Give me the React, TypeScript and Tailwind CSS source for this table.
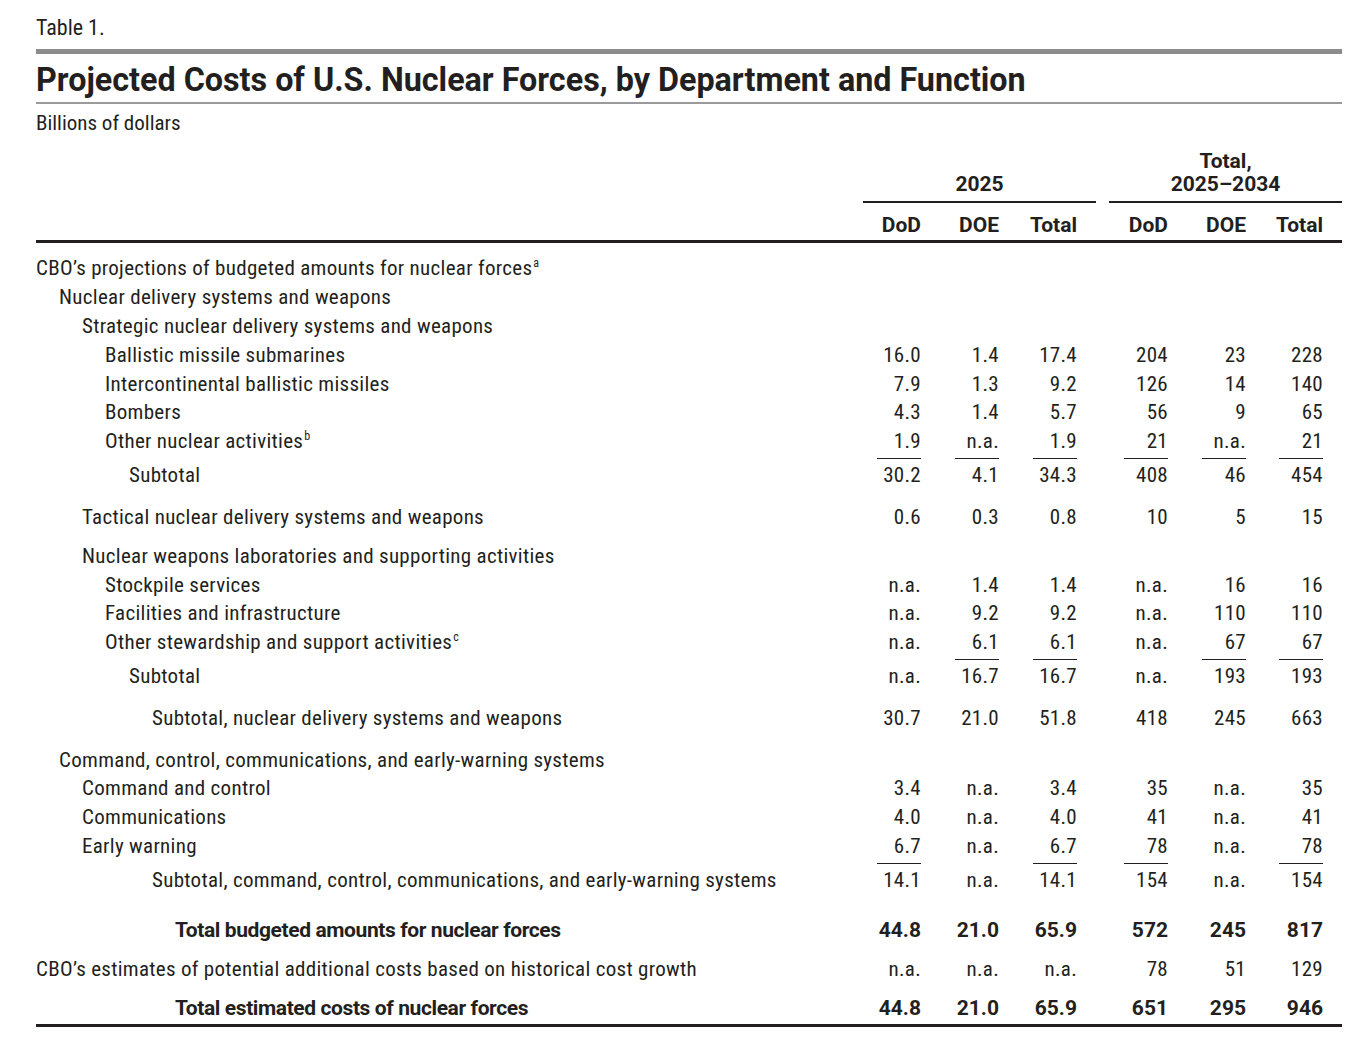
import React from "react";

type RowDef = {
  label: React.ReactNode;
  indent: number;
  vals?: string[];
  bold?: boolean;
  sub?: boolean;
  rules?: boolean[];
  cls: string;
};

const INDENT = [
  "pl-0",
  "pl-[23px]",
  "pl-[46px]",
  "pl-[69px]",
  "pl-[93px]",
  "pl-[116px]",
  "pl-[139px]",
];

const CELL_W1 = ["w-[58px]", "w-[78px]", "w-[78px]"];
const CELL_W2 = ["w-[59px]", "w-[78px]", "w-[77px]"];

const Sup = ({ c }: { c: string }) => (
  <sup className="text-[12px] top-[-0.7em] ml-[1px]">{c}</sup>
);

const all = [true, true, true, true, true, true];

const rows: RowDef[] = [
  {
    label: (
      <>
        CBO’s projections of budgeted amounts for nuclear forces
        <Sup c="a" />
      </>
    ),
    indent: 0,
    cls: "mt-[12px] h-[28.8px]",
  },
  { label: "Nuclear delivery systems and weapons", indent: 1, cls: "h-[28.8px]" },
  { label: "Strategic nuclear delivery systems and weapons", indent: 2, cls: "h-[28.8px]" },
  {
    label: "Ballistic missile submarines",
    indent: 3,
    vals: ["16.0", "1.4", "17.4", "204", "23", "228"],
    cls: "h-[28.8px]",
  },
  {
    label: "Intercontinental ballistic missiles",
    indent: 3,
    vals: ["7.9", "1.3", "9.2", "126", "14", "140"],
    cls: "h-[28.8px]",
  },
  {
    label: "Bombers",
    indent: 3,
    vals: ["4.3", "1.4", "5.7", "56", "9", "65"],
    cls: "h-[28.8px]",
  },
  {
    label: (
      <>
        Other nuclear activities
        <Sup c="b" />
      </>
    ),
    indent: 3,
    vals: ["1.9", "n.a.", "1.9", "21", "n.a.", "21"],
    cls: "h-[28.8px]",
  },
  {
    label: "Subtotal",
    indent: 4,
    vals: ["30.2", "4.1", "34.3", "408", "46", "454"],
    sub: true,
    rules: all,
    cls: "mt-[2px] h-[35px]",
  },
  {
    label: "Tactical nuclear delivery systems and weapons",
    indent: 2,
    vals: ["0.6", "0.3", "0.8", "10", "5", "15"],
    cls: "mt-[10px] h-[29px]",
  },
  {
    label: "Nuclear weapons laboratories and supporting activities",
    indent: 2,
    cls: "mt-[10px] h-[28.7px]",
  },
  {
    label: "Stockpile services",
    indent: 3,
    vals: ["n.a.", "1.4", "1.4", "n.a.", "16", "16"],
    cls: "h-[28.7px]",
  },
  {
    label: "Facilities and infrastructure",
    indent: 3,
    vals: ["n.a.", "9.2", "9.2", "n.a.", "110", "110"],
    cls: "h-[28.7px]",
  },
  {
    label: (
      <>
        Other stewardship and support activities
        <Sup c="c" />
      </>
    ),
    indent: 3,
    vals: ["n.a.", "6.1", "6.1", "n.a.", "67", "67"],
    cls: "h-[28.7px]",
  },
  {
    label: "Subtotal",
    indent: 4,
    vals: ["n.a.", "16.7", "16.7", "n.a.", "193", "193"],
    sub: true,
    rules: [false, true, true, false, true, true],
    cls: "mt-[2px] h-[35px]",
  },
  {
    label: "Subtotal, nuclear delivery systems and weapons",
    indent: 5,
    vals: ["30.7", "21.0", "51.8", "418", "245", "663"],
    cls: "mt-[10px] h-[29px]",
  },
  {
    label: "Command, control, communications, and early-warning systems",
    indent: 1,
    cls: "mt-[13px] h-[28.7px]",
  },
  {
    label: "Command and control",
    indent: 2,
    vals: ["3.4", "n.a.", "3.4", "35", "n.a.", "35"],
    cls: "h-[28.7px]",
  },
  {
    label: "Communications",
    indent: 2,
    vals: ["4.0", "n.a.", "4.0", "41", "n.a.", "41"],
    cls: "h-[28.7px]",
  },
  {
    label: "Early warning",
    indent: 2,
    vals: ["6.7", "n.a.", "6.7", "78", "n.a.", "78"],
    cls: "h-[28.7px]",
  },
  {
    label: "Subtotal, command, control, communications, and early-warning systems",
    indent: 5,
    vals: ["14.1", "n.a.", "14.1", "154", "n.a.", "154"],
    sub: true,
    rules: [true, false, true, true, false, true],
    cls: "mt-[2px] h-[35px]",
  },
  {
    label: "Total budgeted amounts for nuclear forces",
    indent: 6,
    vals: ["44.8", "21.0", "65.9", "572", "245", "817"],
    bold: true,
    cls: "mt-[18px] h-[29px]",
  },
  {
    label: "CBO’s estimates of potential additional costs based on historical cost growth",
    indent: 0,
    vals: ["n.a.", "n.a.", "n.a.", "78", "51", "129"],
    cls: "mt-[10px] h-[29px]",
  },
  {
    label: "Total estimated costs of nuclear forces",
    indent: 6,
    vals: ["44.8", "21.0", "65.9", "651", "295", "946"],
    bold: true,
    cls: "mt-[10px] h-[29px]",
  },
];

function Cell({
  v,
  w,
  sub,
  rule,
}: {
  v?: string;
  w: string;
  sub?: boolean;
  rule?: boolean;
}) {
  if (sub) {
    return (
      <div className={`${w} flex justify-end self-start`}>
        <div
          className={`w-[44px] text-right leading-[32px] border-t-[1.5px] ${
            rule ? "border-[#231f20]" : "border-transparent"
          }`}
        >
          {v}
        </div>
      </div>
    );
  }
  return <div className={`${w} text-right`}>{v}</div>;
}

function Row({ r }: { r: RowDef }) {
  const v = r.vals;
  return (
    <div
      className={`flex items-center ${r.cls} ${
        r.bold ? "font-bold [font-stretch:100%] tracking-[0px]" : "font-normal"
      } ${r.sub ? "leading-[35px]" : "leading-[29px]"}`}
    >
      <div
        className={`flex-1 whitespace-nowrap ${INDENT[r.indent]} ${
          r.bold ? "tracking-[-0.4px]" : ""
        }`}
      >
        {r.label}
      </div>
      <div className="w-[233px] flex pr-[19px] self-stretch items-center">
        {CELL_W1.map((w, i) => (
          <Cell key={i} w={w} v={v?.[i]} sub={r.sub} rule={r.rules?.[i]} />
        ))}
      </div>
      <div className="w-[13px]" />
      <div className="w-[233px] flex pr-[19px] self-stretch items-center">
        {CELL_W2.map((w, i) => (
          <Cell key={i} w={w} v={v?.[i + 3]} sub={r.sub} rule={r.rules?.[i + 3]} />
        ))}
      </div>
    </div>
  );
}

export default function App() {
  return (
    <div className="w-[1360px] h-[1040px] bg-white text-[#231f20] font-['Roboto',sans-serif] [font-stretch:condensed] tracking-[0.3px] text-[21px] pl-[36px] pr-[18px] pt-[14px] overflow-hidden">
      <div className="text-[22px] leading-[28px] tracking-[0px]">Table 1.</div>
      <div className="mt-[7px] h-[5px] bg-[#8c8c8c]" />
      <div className="mt-[6px] text-[32.3px] leading-[40px] font-bold [font-stretch:100%] tracking-[0px] whitespace-nowrap">
        Projected Costs of U.S. Nuclear Forces, by Department and Function
      </div>
      <div className="mt-[2px] h-[1.5px] bg-[#9a9a9a]" />
      <div className="mt-[5px] leading-[28px] tracking-[0px]">Billions of dollars</div>

      {/* Column headers */}
      <div className="mt-[13.5px] flex items-end font-bold [font-stretch:100%] tracking-[0px] leading-[23px]">
        <div className="flex-1" />
        <div className="w-[233px] text-center border-b-2 border-[#231f20] pb-[5px]">2025</div>
        <div className="w-[13px]" />
        <div className="w-[233px] text-center border-b-2 border-[#231f20] pb-[5px]">
          <div>Total,</div>
          <div>2025–2034</div>
        </div>
      </div>
      <div className="mt-[7.5px] flex font-bold [font-stretch:100%] tracking-[0px] leading-[29px] border-b-[3px] border-[#231f20]">
        <div className="flex-1" />
        <div className="w-[233px] flex pr-[19px]">
          <div className="w-[58px] text-right">DoD</div>
          <div className="w-[78px] text-right">DOE</div>
          <div className="w-[78px] text-right">Total</div>
        </div>
        <div className="w-[13px]" />
        <div className="w-[233px] flex pr-[19px]">
          <div className="w-[59px] text-right">DoD</div>
          <div className="w-[78px] text-right">DOE</div>
          <div className="w-[77px] text-right">Total</div>
        </div>
      </div>

      {rows.map((r, i) => (
        <Row key={i} r={r} />
      ))}
      <div className="mt-[1.5px] border-t-[3px] border-[#231f20]" />
    </div>
  );
}
